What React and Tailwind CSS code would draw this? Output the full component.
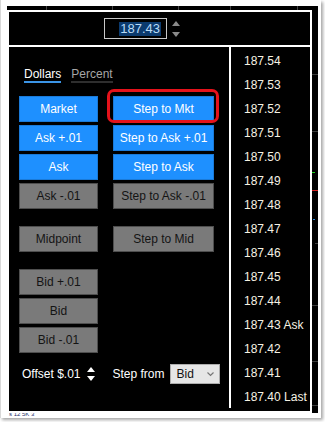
import React from 'react';

const leftRows = [
  { gap: 'mt-0', cells: [['Market', true], ['Step to Mkt', true]] },
  { gap: 'mt-[3px]', cells: [['Ask +.01', true], ['Step to Ask +.01', true]] },
  { gap: 'mt-[3px]', cells: [['Ask', true], ['Step to Ask', true]] },
  { gap: 'mt-[3px]', cells: [['Ask -.01', false], ['Step to Ask -.01', false]] },
  { gap: 'mt-[17px]', cells: [['Midpoint', false], ['Step to Mid', false]] },
  { gap: 'mt-[17px]', cells: [['Bid +.01', false]] },
  { gap: 'mt-[3px]', cells: [['Bid', false]] },
  { gap: 'mt-[3px]', cells: [['Bid -.01', false]] },
];

const ladder = [
  '187.54', '187.53', '187.52', '187.51', '187.50', '187.49', '187.48', '187.47',
  '187.46', '187.45', '187.44', '187.43 Ask', '187.42', '187.41', '187.40 Last',
];

const Btn = ({ label, blue, wide }) => (
  <div
    className={
      'h-[26px] flex items-center justify-center border text-[12px] leading-none ' +
      (wide ? 'w-[101px] ' : 'w-[79px] ') +
      (blue
        ? 'bg-[#1e90ff] border-[#1a7ad8] text-white'
        : 'bg-[#7a7a7a] border-[#4e4e4e] text-[#141414]')
    }
  >
    {label}
  </div>
);

const Spinner = ({ color, h }) => (
  <svg width="8" height={h} viewBox={`0 0 8 ${h}`} className="block">
    <path d="M4 0 L8 5 L0 5 Z" fill={color} />
    <path d={`M0 ${h - 5} L8 ${h - 5} L4 ${h} Z`} fill={color} />
  </svg>
);

// slice of the chart that peeks out to the right of the dialog
const EdgeStrip = () => (
  <svg width="6" height="403" className="block">
    <rect x="0" y="64" width="6" height="1" fill="#3c3c3c" />
    <rect x="0" y="121" width="6" height="1" fill="#3c3c3c" />
    <rect x="0" y="162" width="3" height="1" fill="#19d419" />
    <rect x="0" y="180" width="6" height="1" fill="#d42020" />
    <rect x="1" y="209" width="2" height="1" fill="#2a8ae0" />
    <rect x="3" y="233" width="3" height="1" fill="#3c3c3c" />
    <rect x="0" y="295" width="6" height="1" fill="#3c3c3c" />
    <rect x="0" y="351" width="6" height="1" fill="#3c3c3c" />
    <rect x="0" y="395" width="6" height="1" fill="#3c3c3c" />
  </svg>
);

export default function App() {
  return (
    <div className="w-[325px] h-[422px] bg-white font-['Liberation_Sans',Arial,sans-serif] overflow-hidden">
      <div className="w-[321px] h-[418px] bg-white border-l border-[#d8d8d8] shadow-[2px_2px_3px_rgba(0,0,0,0.35)] pt-[6px] pl-[6px]">
        <div className="w-[311px] bg-black">
          {/* top strip of the app behind */}
          <div className="h-[4px] relative flex">
            <div className="w-[40px] border-r border-[#444]" />
            <div className="w-[66px] border-r border-[#444]" />
            <div className="w-[66px] border-r border-[#444]" />
            <div className="w-[52px] border-r border-[#444]" />
            <div className="w-[67px] border-r border-[#444]" />
          </div>

          <div className="flex">
            {/* dialog */}
            <div className="w-[305px] border-2 border-white bg-black">
              <div className="h-[33px] flex items-center pl-[95px]">
                <div className="w-[63px] h-[21px] border border-[#c8c8c8] flex items-center justify-end pr-[5px]">
                  <span className="bg-[#0b3a6e] text-[#b9dcf7] text-[13px] leading-[14px] px-[1px]">187.43</span>
                </div>
                <div className="ml-[5px]">
                  <Spinner color="#8a8a8a" h={16} />
                </div>
              </div>

              <div className="h-[2px] bg-white" />

              <div className="flex h-[361px]">
                {/* left panel */}
                <div className="w-[220px] pl-[10px] pt-[21px]">
                  <div className="flex ml-[5px] text-[12px] leading-[13px]">
                    <div className="text-white border-b-2 border-[#3b94e6]">Dollars</div>
                    <div className="ml-[10px] text-[#a6a6a6] border-b-2 border-[#2e2e2e]">Percent</div>
                  </div>

                  <div className="mt-[13px] flex flex-col">
                    {leftRows.map((row, i) => (
                      <div key={i} className={'flex gap-[15px] ' + row.gap}>
                        <Btn label={row.cells[0][0]} blue={row.cells[0][1]} />
                        {row.cells[1] && (
                          <div className="relative">
                            <Btn label={row.cells[1][0]} blue={row.cells[1][1]} wide />
                            {i === 0 && (
                              <div className="absolute -left-[6px] -top-[7px] w-[112px] h-[34px] border-[3px] border-[#e5121b] rounded-[7px]" />
                            )}
                          </div>
                        )}
                      </div>
                    ))}
                  </div>

                  <div className="mt-[11px] h-[20px] flex items-center text-[12px] text-white">
                    <span className="ml-[3px]">Offset $.01</span>
                    <span className="ml-[7px]">
                      <Spinner color="#ffffff" h={14} />
                    </span>
                    <span className="ml-[17px]">Step from</span>
                    <div className="ml-[5px] w-[50px] h-[20px] bg-[#e6e6e6] border border-[#adadad] flex items-center justify-between pl-[6px] pr-[5px] text-[#111]">
                      <span>Bid</span>
                      <svg width="7" height="5" viewBox="0 0 7 5">
                        <path d="M0.5 0.5 L3.5 3.5 L6.5 0.5" stroke="#777" strokeWidth="1.2" fill="none" />
                      </svg>
                    </div>
                  </div>
                </div>

                <div className="w-[2px] bg-white" />

                {/* price ladder */}
                <div className="flex-1 pl-[13px] pt-[2px] overflow-hidden">
                  {ladder.map((p) => (
                    <div key={p} className="h-[24px] flex items-center text-[12px] text-[#f6f2e4]">
                      {p}
                    </div>
                  ))}
                </div>
              </div>
            </div>
            <EdgeStrip />
          </div>

          {/* cut-off status line */}
          <div className="h-[3px] bg-white overflow-hidden">
            <div className="text-[6px] leading-[4px] text-[#1a2a6a] pl-[2px] -mt-[1px]">s 12 5K 3</div>
          </div>
        </div>
      </div>
    </div>
  );
}
